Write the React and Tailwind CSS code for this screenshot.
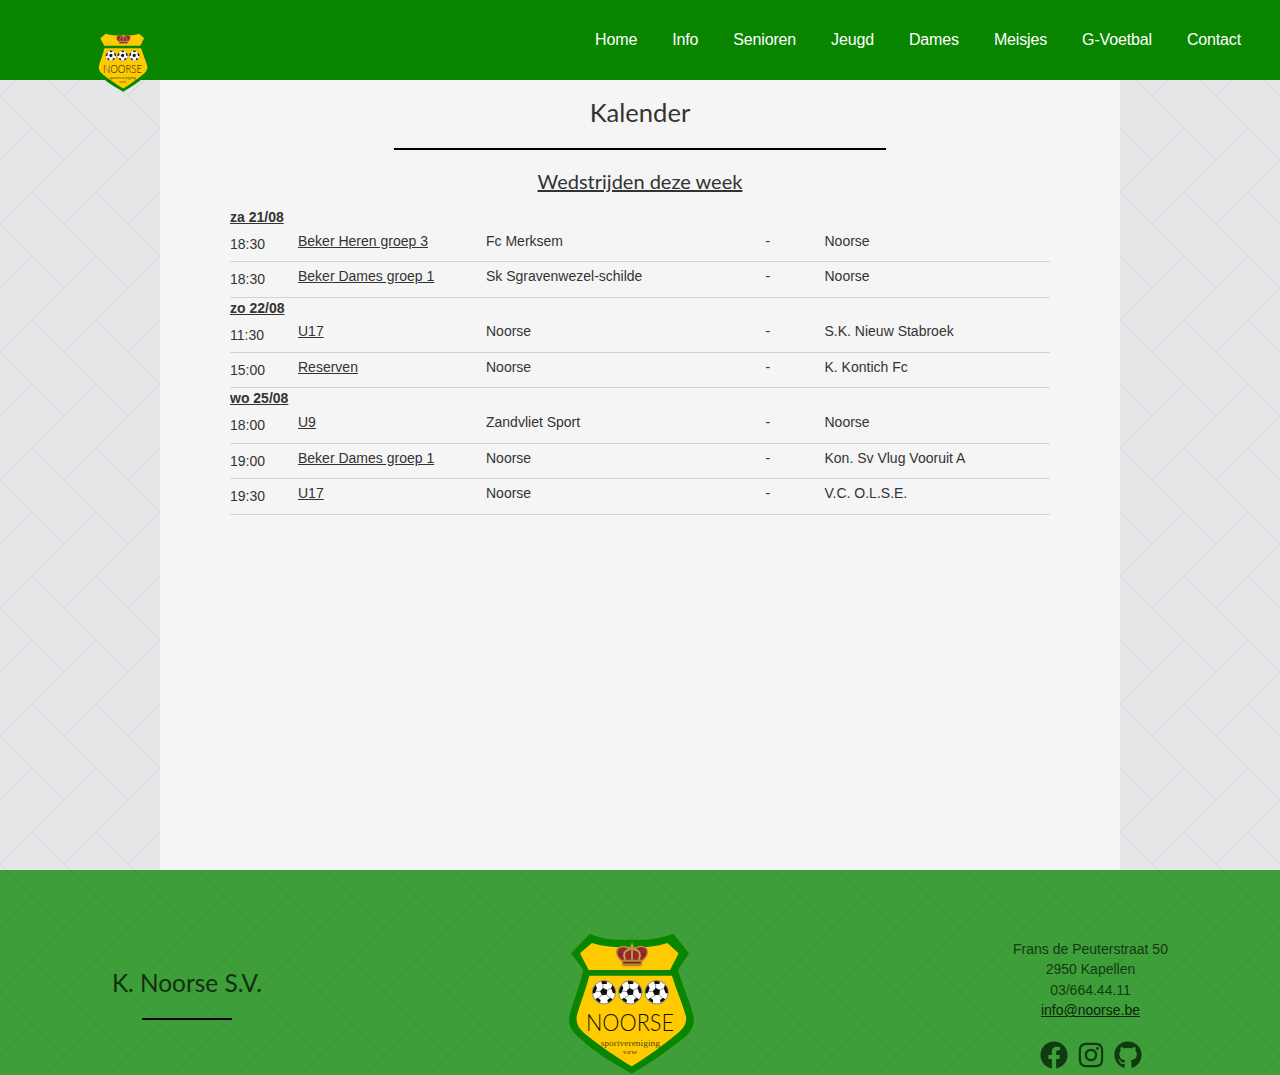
import React from 'react'
import { FaFacebook, FaInstagram, FaGithub } from 'react-icons/fa'

const navItems = ['Home', 'Info', 'Senioren', 'Jeugd', 'Dames', 'Meisjes', 'G-Voetbal', 'Contact']

const days = [
  {
    date: 'za 21/08',
    games: [
      ['18:30', 'Beker Heren groep 3', 'Fc Merksem', 'Noorse'],
      ['18:30', 'Beker Dames groep 1', 'Sk Sgravenwezel-schilde', 'Noorse'],
    ],
  },
  {
    date: 'zo 22/08',
    games: [
      ['11:30', 'U17', 'Noorse', 'S.K. Nieuw Stabroek'],
      ['15:00', 'Reserven', 'Noorse', 'K. Kontich Fc'],
    ],
  },
  {
    date: 'wo 25/08',
    games: [
      ['18:00', 'U9', 'Zandvliet Sport', 'Noorse'],
      ['19:00', 'Beker Dames groep 1', 'Noorse', 'Kon. Sv Vlug Vooruit A'],
      ['19:30', 'U17', 'Noorse', 'V.C. O.L.S.E.'],
    ],
  },
]

// herringbone tile is 64x128, offsetY keeps it lined up with the page origin
const Herringbone = ({ id, stroke, strokeOpacity = 1, offsetY = 0 }) => (
  <svg className="absolute inset-0 w-full h-full" aria-hidden="true">
    <defs>
      <pattern id={id} width="64" height="128" patternUnits="userSpaceOnUse" patternTransform={`translate(0 ${offsetY})`}>
        <path
          d="M32 64L128 160M-32 64L64 160M-96 64L0 160M32 -64L128 32M-32 -64L64 32M-96 -64L0 32M96 0L0 96M32 0L-64 96M160 0L64 96"
          fill="none"
          stroke={stroke}
          strokeOpacity={strokeOpacity}
          strokeWidth="2"
        />
      </pattern>
    </defs>
    <rect width="100%" height="100%" fill={`url(#${id})`} />
  </svg>
)

const Ball = ({ x, y }) => (
  <g transform={`translate(${x} ${y})`}>
    <circle r="35" fill="#fff" stroke="#222" strokeWidth="1.5" />
    <path d="M-3 -13L10 -7L8 7L-6 9L-12 -3Z" fill="#111" />
    <path d="M-8 -33A34 34 0 0 1 10 -32L8 -25L-6 -25Z" fill="#111" />
    <path d="M25 -22A34 34 0 0 1 34 3L27 3L21 -12Z" fill="#111" />
    <path d="M26 21A34 34 0 0 1 12 31L10 23L19 16Z" fill="#111" />
    <path d="M-26 21A34 34 0 0 0 -12 31L-10 23L-19 16Z" fill="#111" />
    <path d="M-25 -22A34 34 0 0 0 -34 3L-27 3L-21 -12Z" fill="#111" />
    <path d="M-3 -13V-25M10 -7L21 -12M8 7L17 17M-6 9L-17 17M-12 -3L-25 -3" stroke="#333" strokeWidth="1.5" />
  </g>
)

const Crown = () => (
  <g>
    <path d="M214 124C198 112 194 90 212 84C224 80 234 85 240 91L246 75L252 91C260 84 272 80 282 84C298 90 294 112 278 124Z" fill="#962a2a" stroke="#b98f45" strokeWidth="4" />
    <path d="M226 122C218 108 222 94 240 91M266 122C274 108 270 94 252 91M246 78V122" fill="none" stroke="#c9a352" strokeWidth="5" />
    <circle cx="213" cy="106" r="4" fill="#7a1f1f" />
    <circle cx="279" cy="106" r="4" fill="#7a1f1f" />
    <path d="M214 124H278L274 142H218Z" fill="#b8862f" />
    <path d="M220 131H272" stroke="#7d2420" strokeWidth="5" />
  </g>
)

const Shield = ({ className }) => (
  <svg viewBox="0 0 480 465" className={className} aria-hidden="true">
    <path
      d="M120 44C160 62 200 64 240 62C280 64 320 62 370 44L417 103L384 152C396 196 420 250 431 292C434 320 424 338 400 358C350 398 296 436 245 464C194 436 130 398 90 358C66 338 54 320 58 292C68 250 92 196 100 152L63 103Z"
      fill="#0a8500"
    />
    <path
      d="M126 72C165 84 205 86 240 85C280 86 315 84 352 72L386 103L360 153H116L90 103Z"
      fill="#ffcb00"
    />
    <path
      d="M118 170H366C378 210 398 255 408 292C410 314 402 326 384 342C340 378 292 414 245 442C198 414 146 378 102 342C86 326 78 314 80 292C90 255 108 210 118 170Z"
      fill="#ffcb00"
    />
    <Crown />
    <Ball x={162} y={220} />
    <Ball x={241} y={220} />
    <Ball x={320} y={220} />
    <text x="240" y="336" textAnchor="middle" fontFamily="Lato, sans-serif" fontWeight="300" fontSize="72" textLength="264" lengthAdjust="spacingAndGlyphs" fill="#111">NOORSE</text>
    <text x="241" y="381" textAnchor="middle" fontFamily="'Liberation Serif', serif" fontSize="25" textLength="178" lengthAdjust="spacingAndGlyphs" fill="#4f4a12">sportvereniging</text>
    <text x="240" y="404" textAnchor="middle" fontFamily="'Liberation Serif', serif" fontSize="20" textLength="44" lengthAdjust="spacingAndGlyphs" fill="#4f4a12">vzw</text>
  </svg>
)

const GameRow = ({ game }) => {
  const [time, team, home, away] = game
  return (
    <div className="flex h-[35.5px] border-b border-[#d4d4d4]">
      <span className="w-[68px] pt-[7.25px]">{time}</span>
      <a href="#" className="w-[188px] pt-[4px] underline">{team}</a>
      <span className="w-[279.5px] pt-[4px]">{home}</span>
      <span className="w-[59px] pt-[4px]">-</span>
      <span className="pt-[4px]">{away}</span>
    </div>
  )
}

export default function App() {
  return (
    <div className="relative h-[1075px] overflow-hidden bg-[#e4e6e8] font-['Liberation_Sans',sans-serif] text-[#333]">
      <Herringbone id="page-lines" stroke="#dddfe1" />

      <header className="relative z-10 flex h-20 items-center justify-end gap-[35px] bg-[#0a8500] pr-[39px] text-base tracking-[-0.15px] text-white">
        <Shield className="absolute left-[87px] top-[23px] h-[69px] w-[71px]" />
        {navItems.map((item) => (
          <a key={item} href="#">{item}</a>
        ))}
      </header>

      <main className="relative mx-auto h-[790px] w-[960px] bg-[#f5f5f5] px-[70px] pt-[15px] text-sm">
        <h1 className="text-center font-['Lato',sans-serif] text-[25.6px] leading-[34px]">Kalender</h1>
        <div className="mx-auto mt-[19px] h-[2px] w-[492px] bg-black" />
        <h2 className="mt-[18px] text-center font-['Lato',sans-serif] text-[20px] leading-[27px] underline">
          Wedstrijden deze week
        </h2>
        <div className="mt-[11.75px]">
          {days.map((day) => (
            <div key={day.date}>
              <div className="h-[19.75px] font-bold leading-[20px] underline">{day.date}</div>
              {day.games.map((game, i) => (
                <GameRow key={i} game={game} />
              ))}
            </div>
          ))}
        </div>
      </main>

      <footer className="relative grid h-[205px] grid-cols-[374px_511px_1fr] bg-[#078700]/75 text-sm text-[#123a12]">
        <Herringbone id="footer-lines" stroke="#000" strokeOpacity={0.02} offsetY={26} />
        <div className="relative flex flex-col items-center pt-[96px]">
          <h3 className="font-['Lato',sans-serif] text-[24.4px] leading-[34px] text-[#10300f]">K. Noorse S.V.</h3>
          <div className="mt-[18px] h-[2px] w-[90px] bg-black" />
        </div>
        <div className="relative flex justify-center pt-[49px]">
          <Shield className="h-[155px] w-[160px]" />
        </div>
        <div className="relative flex flex-col items-center pl-[16px] pt-[69px] leading-[20.4px]">
          <p>Frans de Peuterstraat 50</p>
          <p>2950 Kapellen</p>
          <p>03/664.44.11</p>
          <a href="#" className="text-[#0b240b] underline">info@noorse.be</a>
          <div className="mt-[20px] flex items-center gap-[9px] text-[28px] text-[#113a11]">
            <FaFacebook />
            <FaInstagram />
            <FaGithub />
          </div>
        </div>
      </footer>
    </div>
  )
}
